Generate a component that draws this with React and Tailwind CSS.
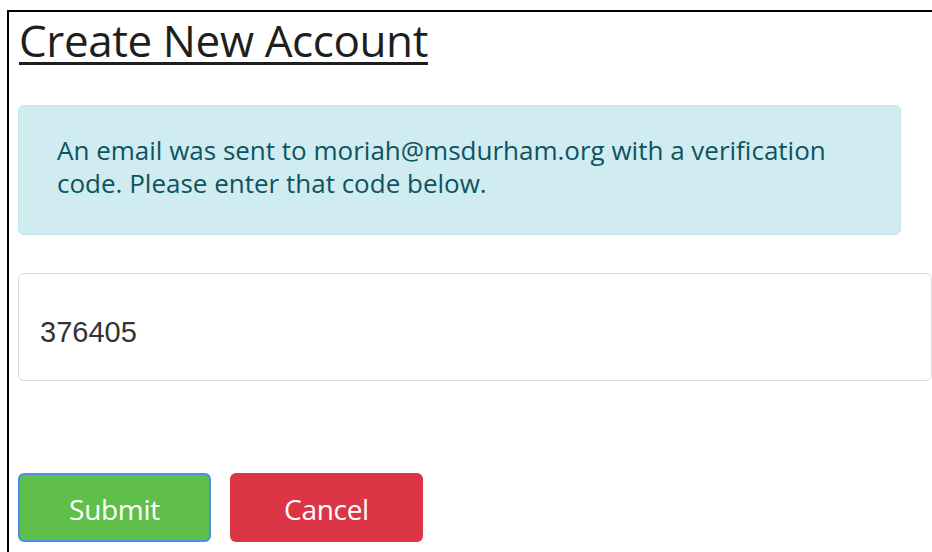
const App = () => {
  return (
    <div className="w-[932px] h-[552px] bg-white overflow-hidden pt-[10px] pl-[7px]">
      <div className="h-full border-t-2 border-l-2 border-black pl-[9px] font-['Open_Sans',sans-serif]">
        <h1 className="mt-[2px] ml-[1px] text-[44px] leading-[52px] font-medium tracking-[-0.4px] text-[#1e1e1e] underline decoration-[3px] underline-offset-[5px]">
          Create New Account
        </h1>
        <div className="mt-[39px] w-[883px] h-[130px] rounded-md border border-[#bee5eb] bg-[#d1ecf1] pl-[38px] pr-[53px] pt-[28px] text-[26px] leading-[33px] text-[#0c5460]">
          An email was sent to moriah@msdurham.org with a verification code. Please enter that code below.
        </div>
        <div className="mt-[38px] w-[914px] h-[108px] rounded-md border border-[#dcdcdc] flex items-center pl-[21px] pt-[12px] font-['Liberation_Sans',sans-serif] text-[29px] text-[#333]">
          376405
        </div>
        <div className="mt-[92px] flex gap-[19px]">
          <button className="w-[193px] h-[69px] pt-0.5 rounded-md bg-[#5fbf4a] border-2 border-[#4a8fe8] text-white text-[28px] tracking-[-0.3px]">
            Submit
          </button>
          <button className="w-[193px] h-[69px] pt-0.5 rounded-md bg-[#dc3545] text-white text-[28px] tracking-[-0.3px]">
            Cancel
          </button>
        </div>
      </div>
    </div>
  )
}

export default App
